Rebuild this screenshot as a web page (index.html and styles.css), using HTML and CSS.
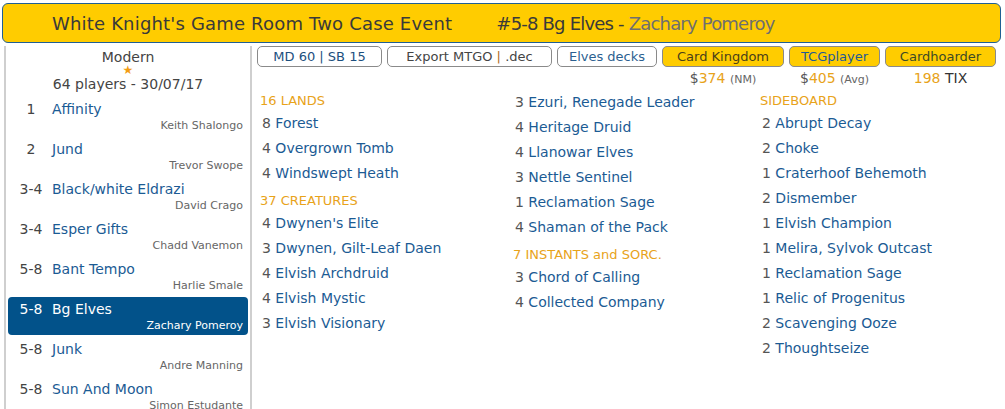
FILE: index.html
```html
<!DOCTYPE html>
<html lang="en">
<head>
  <meta charset="UTF-8" />
  <title>#5-8 Bg Elves - Zachary Pomeroy</title>
  <link rel="stylesheet" href="styles.css">
</head>
<body>
  <div class="header">
    <span class="event-title">White Knight's Game Room Two Case Event</span>
    <span class="deck-title">#5-8 Bg Elves - <span class="pilot">Zachary Pomeroy</span></span>
  </div>

  <div class="layout">
    <!-- Event standings -->
    <div class="sidebar">
      <div class="event-info">
        <div>Modern</div>
        <div class="star">★</div>
        <div>64 players - 30/07/17</div>
      </div>

      <div class="entry"><span class="rank">1</span><span class="deck-name">Affinity</span><div class="player">Keith Shalongo</div></div>
      <div class="entry"><span class="rank">2</span><span class="deck-name">Jund</span><div class="player">Trevor Swope</div></div>
      <div class="entry"><span class="rank">3-4</span><span class="deck-name">Black/white Eldrazi</span><div class="player">David Crago</div></div>
      <div class="entry"><span class="rank">3-4</span><span class="deck-name">Esper Gifts</span><div class="player">Chadd Vanemon</div></div>
      <div class="entry"><span class="rank">5-8</span><span class="deck-name">Bant Tempo</span><div class="player">Harlie Smale</div></div>
      <div class="entry selected"><span class="rank">5-8</span><span class="deck-name">Bg Elves</span><div class="player">Zachary Pomeroy</div></div>
      <div class="entry"><span class="rank">5-8</span><span class="deck-name">Junk</span><div class="player">Andre Manning</div></div>
      <div class="entry"><span class="rank">5-8</span><span class="deck-name">Sun And Moon</span><div class="player">Simon Estudante</div></div>
    </div>

    <div class="main">
      <div class="toolbar">
        <div class="btn btn-md">MD 60 | SB 15</div>
        <div class="btn btn-export">Export MTGO <span class="sep">|</span> .dec</div>
        <div class="btn btn-similar">Elves decks</div>
        <div class="shop">
          <div class="btn gold ck">Card Kingdom</div>
          <div class="price">$<b>374</b> <small>(NM)</small></div>
        </div>
        <div class="shop">
          <div class="btn gold tcg">TCGplayer</div>
          <div class="price">$<b>405</b> <small>(Avg)</small></div>
        </div>
        <div class="shop">
          <div class="btn gold ch">Cardhoarder</div>
          <div class="price"><b>198</b> <span class="tix">TIX</span></div>
        </div>
      </div>

      <div class="decklist">
        <div class="col">
          <div class="section first">16 LANDS</div>
          <div class="card">8 <span>Forest</span></div>
          <div class="card">4 <span>Overgrown Tomb</span></div>
          <div class="card">4 <span>Windswept Heath</span></div>
          <div class="section">37 CREATURES</div>
          <div class="card">4 <span>Dwynen's Elite</span></div>
          <div class="card">3 <span>Dwynen, Gilt-Leaf Daen</span></div>
          <div class="card">4 <span>Elvish Archdruid</span></div>
          <div class="card">4 <span>Elvish Mystic</span></div>
          <div class="card">3 <span>Elvish Visionary</span></div>
        </div>
        <div class="col">
          <div class="card">3 <span>Ezuri, Renegade Leader</span></div>
          <div class="card">4 <span>Heritage Druid</span></div>
          <div class="card">4 <span>Llanowar Elves</span></div>
          <div class="card">3 <span>Nettle Sentinel</span></div>
          <div class="card">1 <span>Reclamation Sage</span></div>
          <div class="card">4 <span>Shaman of the Pack</span></div>
          <div class="section">7 INSTANTS and SORC.</div>
          <div class="card">3 <span>Chord of Calling</span></div>
          <div class="card">4 <span>Collected Company</span></div>
        </div>
        <div class="col">
          <div class="section first">SIDEBOARD</div>
          <div class="card">2 <span>Abrupt Decay</span></div>
          <div class="card">2 <span>Choke</span></div>
          <div class="card">1 <span>Craterhoof Behemoth</span></div>
          <div class="card">2 <span>Dismember</span></div>
          <div class="card">1 <span>Elvish Champion</span></div>
          <div class="card">1 <span>Melira, Sylvok Outcast</span></div>
          <div class="card">1 <span>Reclamation Sage</span></div>
          <div class="card">1 <span>Relic of Progenitus</span></div>
          <div class="card">2 <span>Scavenging Ooze</span></div>
          <div class="card">2 <span>Thoughtseize</span></div>
        </div>
      </div>
    </div>
  </div>
</body>
</html>
```

FILE: styles.css
```css
body {
  margin: 0;
  font-family: "DejaVu Sans", Verdana, sans-serif;
  color: #444;
  background: #fff;
  overflow: hidden;
}

.header {
  margin: 3px 4px 0 2px;
  height: 38px;
  background-color: #ffcc00;
  border: 1px solid #1f5f94;
  border-radius: 6px;
  display: flex;
  align-items: center;
  padding-left: 49px;
  font-size: 18px;
  color: #3a3a3a;
}

.event-title {
  letter-spacing: 0.18px;
}

.deck-title {
  margin-left: 44px;
  letter-spacing: -0.8px;
}

.pilot {
  color: #6f6f6f;
}

.layout {
  display: flex;
  height: 366px;
}

/* standings column */
.sidebar {
  width: 242px;
  margin: 3px 0 0 4px;
  border-left: 2px solid #cfcfcf;
  border-right: 2px solid #cfcfcf;
  padding: 0 1px;
}

.event-info {
  text-align: center;
  font-size: 14px;
  line-height: 13px;
  padding-top: 5px;
  color: #444;
  margin-bottom: 6px;
}

.event-info .star {
  color: #f39c12;
  font-size: 12px;
}

.event-info div:last-child {
  padding-top: 1px;
}

.entry {
  height: 38px;
  margin: 0 1px 2px;
  box-sizing: border-box;
  padding: 4px 5px 0 0;
  border-radius: 4px;
  font-size: 14px;
  line-height: 16px;
}

.rank {
  display: inline-block;
  width: 44px;
  padding-left: 2px;
  box-sizing: border-box;
  text-align: center;
  color: #444;
}

.deck-name {
  color: #1b5b94;
}

.player {
  text-align: right;
  font-size: 11px;
  line-height: 14px;
  margin-top: 2px;
  color: #666;
}

.entry.selected {
  background-color: #02528a;
}

.entry.selected .rank,
.entry.selected .deck-name,
.entry.selected .player {
  color: #fff;
}

/* deck area */
.main {
  flex: 1;
  padding-left: 5px;
}

.toolbar {
  display: flex;
  gap: 5px;
  margin-top: 3px;
  align-items: flex-start;
}

.btn {
  height: 21px;
  box-sizing: border-box;
  border: 1px solid #8a8a8a;
  border-radius: 5px;
  text-align: center;
  font-size: 13px;
  line-height: 19px;
  color: #2c5a85;
  background: #fff;
}

.btn-md { width: 125px; color: #1c4f7e; }
.btn-export { width: 165px; color: #444; }
.btn-export .sep { color: #b06a1c; }
.btn-similar { width: 100px; color: #2c5f90; }

.btn.gold {
  background-color: #ffcc00;
}

.ck { width: 122px; color: #4a3f1a; }
.tcg { width: 91px; color: #1f5a96; }
.ch { width: 111px; color: #3d4a26; }

.shop {
  display: flex;
  flex-direction: column;
  align-items: center;
}

.price {
  font-size: 14px;
  line-height: 20px;
  padding-top: 1px;
  color: #555;
}

.price b {
  font-weight: normal;
  color: #e8a31a;
}

.price small {
  font-size: 11px;
  color: #666;
}

.price .tix {
  color: #333;
}

.decklist {
  display: grid;
  grid-template-columns: 253px 247px 1fr;
  padding-left: 3px;
}

.section {
  font-size: 13px;
  line-height: 21px;
  color: #e8a31a;
  margin-top: 4px;
}

.section.first {
  margin-top: 0;
}

.card {
  font-size: 14px;
  line-height: 25px;
  color: #555;
  padding-left: 2px;
}

.card span {
  color: #1b5b94;
}
```
